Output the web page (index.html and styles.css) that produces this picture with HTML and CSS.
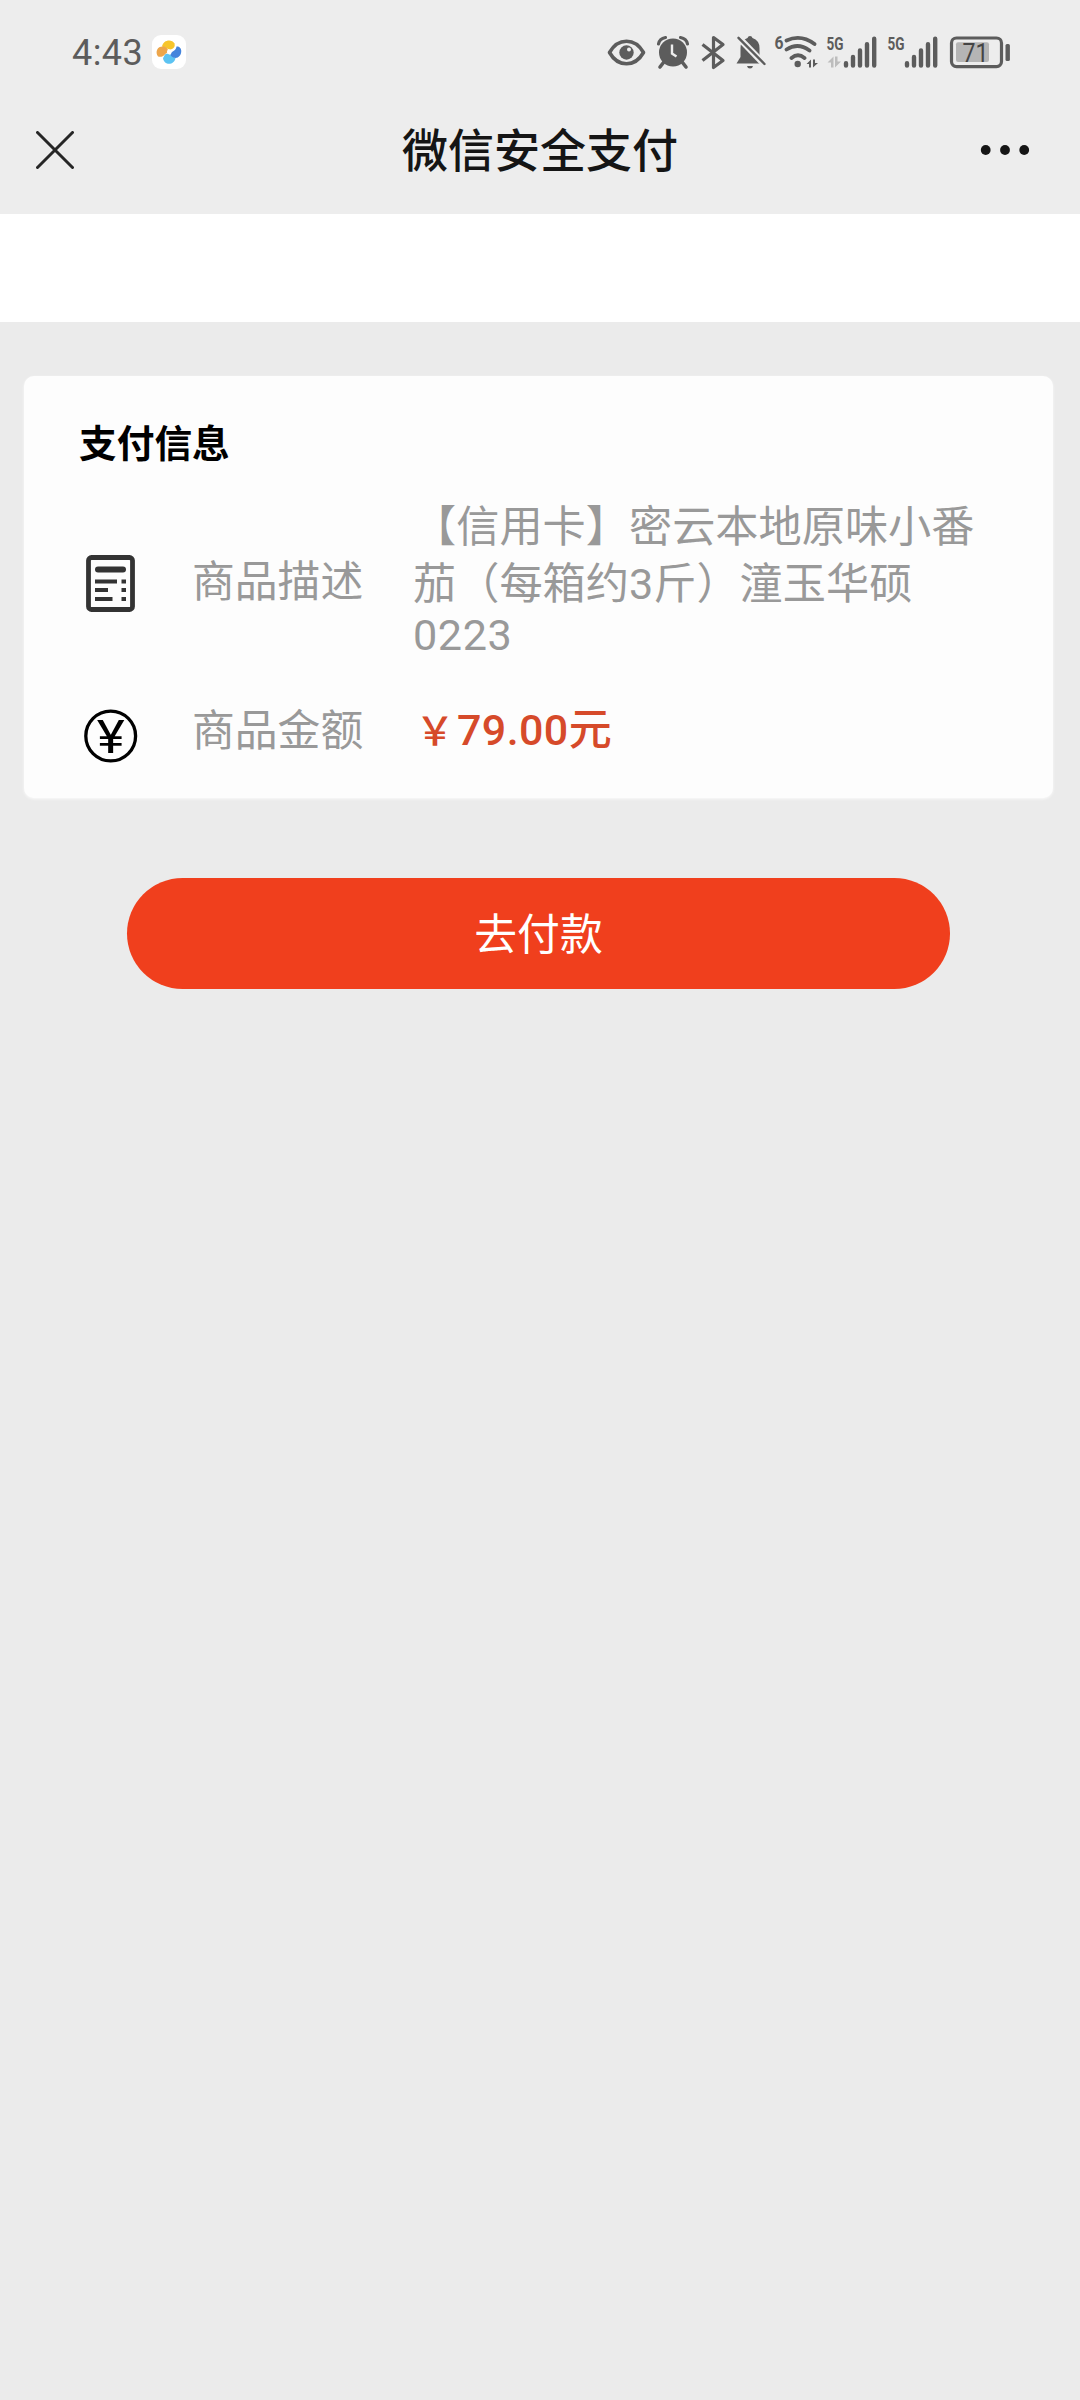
FILE: index.html
```html
<!DOCTYPE html>
<html lang="zh-CN">
<head>
  <meta charset="UTF-8" />
  <meta name="viewport" content="width=device-width, initial-scale=1.0" />
  <title>微信安全支付</title>
  <link rel="stylesheet" href="styles.css">
</head>
<body>
  <header class="top">
    <div class="status-bar">
      <span class="clock">4:43</span>
      <svg class="app-badge" width="34" height="34" viewBox="0 0 34 34">
        <path d="M10 11.500 C11 4.500 20 3.500 22.500 8.500 C23.500 12 21 14.500 17.500 14.500 Z" fill="#f7c52b"/>
        <path d="M6 21.500 C2.500 16 6 10.500 12 11.500 C16 12.500 17 16 15 18 C12.500 18.500 12 23 6 21.500 Z" fill="#eda64b"/>
        <path d="M11 23 C12.500 21.500 12 18.500 16 18.500 C19 19.500 20 21.500 23.500 23 C22.500 30.500 12 31 11 23 Z" fill="#5cc3f2"/>
        <path d="M18.500 19.500 C18 16 24 17 24.500 11.500 C31.500 11 30.500 22.500 23.500 23 C20.500 22.500 18.800 21.500 18.500 19.500 Z" fill="#4484dc"/>
        <circle cx="17.300" cy="17" r="2.400" fill="#fff"/>
      </svg>

      <div class="status-icons">
        <!-- eye comfort -->
        <svg width="46" height="40" viewBox="0 0 46 40">
          <path d="M5.500 20.500 C14 5.500 31 5.500 39.500 20.500 C31 35.500 14 35.500 5.500 20.500 Z" fill="none" stroke="#5c5c5c" stroke-width="3.600" stroke-linejoin="round"/>
          <circle cx="22.500" cy="20.500" r="7.200" fill="#5c5c5c"/>
          <circle cx="25" cy="17.500" r="2" fill="#ededed"/>
        </svg>
        <!-- alarm -->
        <svg width="45" height="40" viewBox="0 0 45 40">
          <circle cx="23" cy="20.500" r="14" fill="#5c5c5c"/>
          <path d="M8.500 12 Q9.500 6.500 15.500 5.500 M37.500 12 Q36.500 6.500 30.500 5.500" fill="none" stroke="#5c5c5c" stroke-width="3.200" stroke-linecap="round"/>
          <path d="M13.500 30.500 L10 35 M32.500 30.500 L36 35" stroke="#5c5c5c" stroke-width="3.600" stroke-linecap="round"/>
          <path d="M22 12.500 V21.500 L26.500 24.500" fill="none" stroke="#ededed" stroke-width="2.400"/>
        </svg>
        <!-- bluetooth -->
        <svg width="36" height="40" viewBox="0 0 36 40">
          <path d="M7.500 12.500 L28 28.500 L18.500 35.500 V5.500 L28 12.500 L7.500 28.500" fill="none" stroke="#5c5c5c" stroke-width="3.200" stroke-linejoin="round"/>
        </svg>
        <!-- muted bell -->
        <svg width="39" height="40" viewBox="0 0 39 40">
          <path d="M19 4 Q21 4 21.500 6 Q28.500 8.500 28.500 16 V24 L32 31.500 H5.500 L9.500 25 V16 Q9.500 8.500 16.500 6 Q17 4 19 4 Z" fill="#5c5c5c"/>
          <path d="M16 34 H22 Q21.500 36.500 19 36.500 Q16.500 36.500 16 34 Z" fill="#5c5c5c"/>
          <path d="M7.500 5.500 L33 32" stroke="#ededed" stroke-width="6.500"/>
          <path d="M7.500 5.800 L33.500 32" stroke="#5c5c5c" stroke-width="2.400" stroke-linecap="round"/>
        </svg>
        <!-- wifi 6 -->
        <svg width="52" height="40" viewBox="0 0 52 40">
          <text x="4.500" y="17" class="mini" textLength="9" lengthAdjust="spacingAndGlyphs">6</text>
          <path d="M16.500 8.500 Q31 2 44.500 12 M16.500 17.500 Q28 10 39.500 18.500 M21.500 26 Q28 20.500 34.500 26" fill="none" stroke="#5c5c5c" stroke-width="3.800" stroke-linecap="round"/>
          <circle cx="27.700" cy="32" r="3.200" fill="#5c5c5c"/>
          <path d="M41 27.500 V35.500 H39 V32 H36.500 Z M43 35.500 V27.500 H45 V31 H48 Z" fill="#5c5c5c"/>
        </svg>
        <!-- sim 1 -->
        <svg width="60" height="40" viewBox="0 0 60 40">
          <text x="4.500" y="18" class="mini" textLength="17" lengthAdjust="spacingAndGlyphs">5G</text>
          <path d="M11.500 24.500 V35.500 H9 V30.500 H5.500 Z M13 35.500 V24.500 H15.500 V29.500 H19 Z" fill="#bdbdbd"/>
          <path d="M24 31.200 V33.500 M31 25 V33.500 M38 18.500 V33.500 M45 12.200 V33.500 M52.200 6.700 V33.500" stroke="#5c5c5c" stroke-width="4.400" stroke-linecap="round"/>
        </svg>
        <!-- sim 2 -->
        <svg width="60" height="40" viewBox="0 0 60 40">
          <text x="5.500" y="18" class="mini" textLength="17" lengthAdjust="spacingAndGlyphs">5G</text>
          <path d="M25 31.200 V33.500 M32 25 V33.500 M39 18.500 V33.500 M46 12.200 V33.500 M53.200 6.700 V33.500" stroke="#5c5c5c" stroke-width="4.400" stroke-linecap="round"/>
        </svg>
        <!-- battery -->
        <svg width="74" height="40" viewBox="0 0 74 40">
          <rect x="9.500" y="6" width="50" height="28.600" rx="5" fill="none" stroke="#5c5c5c" stroke-width="3.200"/>
          <rect x="14" y="10.300" width="33" height="19.700" rx="2" fill="#b5b5b5"/>
          <rect x="63.500" y="12" width="4.400" height="17" rx="1.500" fill="#5c5c5c"/>
          <text x="20.500" y="29.500" class="percent" textLength="26" lengthAdjust="spacingAndGlyphs">71</text>
        </svg>
      </div>
    </div>

    <nav class="nav-bar">
      <svg class="close" width="38" height="38" viewBox="0 0 38 38">
        <path d="M1.500 1.500 L36.500 36.500 M36.500 1.500 L1.500 36.500" stroke="#262626" stroke-width="3" stroke-linecap="round"/>
      </svg>
      <h1>微信安全支付</h1>
      <svg class="more" width="50" height="12" viewBox="0 0 50 12">
        <circle cx="5.700" cy="6" r="4.900" fill="#151515"/>
        <circle cx="25" cy="6" r="4.900" fill="#151515"/>
        <circle cx="44.200" cy="6" r="4.900" fill="#151515"/>
      </svg>
    </nav>
  </header>

  <div class="blank"></div>

  <main>
    <section class="card">
      <h2>支付信息</h2>
      <div class="row goods">
        <svg class="icon" width="56" height="58" viewBox="0 0 56 58">
          <rect x="4.500" y="2.500" width="44" height="52" rx="3" fill="none" stroke="#333" stroke-width="4.800"/>
          <path d="M14 14.500 H39" stroke="#333" stroke-width="6" stroke-linecap="round"/>
          <path d="M11 26.500 H33 M11 35 H24 M11 44 H28.500 M37.500 26.500 H42 M37.500 35 H42 M37.500 44 H42" stroke="#333" stroke-width="4.200"/>
        </svg>
        <span class="label">商品描述</span>
        <p class="desc">【信用卡】密云本地原味小番茄（每箱约3斤）潼玉华硕<span class="code">0223</span></p>
      </div>
      <div class="row amount">
        <svg class="icon" width="56" height="56" viewBox="0 0 56 56">
          <circle cx="26.700" cy="27" r="24.900" fill="none" stroke="#000" stroke-width="3.300"/>
          <text x="12.700" y="44" class="yen" textLength="28" lengthAdjust="spacingAndGlyphs">¥</text>
        </svg>
        <span class="label">商品金额</span>
        <span class="price"><span class="sign">￥</span><span class="num">79.00</span>元</span>
      </div>
    </section>
    <button class="pay" type="button">去付款</button>
  </main>
</body>
</html>
```

FILE: styles.css
```css
* {
  box-sizing: border-box;
}
body {
  margin: 0;
  min-height: 2400px;
  background: #ebebeb;
  font-family: "Noto Sans CJK SC", sans-serif;
}
h1, h2, p {
  margin: 0;
}
svg {
  display: block;
  flex: none;
}

/* Status bar and title */
.top {
  height: 214px;
  background: #ededed;
}
.status-bar {
  display: flex;
  align-items: center;
  height: 104px;
  padding: 0 64px 0 72px;
}
.clock {
  width: 80px;
  padding-top: 2px;
  font-family: Roboto, sans-serif;
  font-size: 36px;
  line-height: 40px;
  letter-spacing: 0.4px;
  color: #5c5c5c;
}
.app-badge {
  background: #fff;
  border-radius: 9px;
}
.status-icons {
  display: flex;
  margin-left: auto;
}
.mini {
  font: bold 18px Roboto, sans-serif;
  fill: #5c5c5c;
}
.percent {
  font: 26px Roboto, sans-serif;
  fill: #444;
}
.nav-bar {
  display: flex;
  align-items: center;
  justify-content: space-between;
  height: 91px;
  padding: 0 50px 0 36px;
}
.nav-bar h1 {
  margin: 0 0 5px 26px;
  font-size: 46px;
  font-weight: 500;
  line-height: 60px;
  color: #151515;
}

.blank {
  height: 108px;
  background: #fff;
}

/* Payment info */
main {
  padding: 54px 27px 0 24px;
}
.card {
  height: 422px;
  padding: 38px 50px 0 55px;
  background: #fdfdfd;
  border-radius: 10px;
  box-shadow: 0 1px 3px rgba(255, 255, 255, 0.8);
}
.card h2 {
  font-size: 37.7px;
  font-weight: 700;
  line-height: 54px;
  color: #000;
}
.row {
  display: flex;
  align-items: flex-start;
  padding-left: 5px;
}
.goods {
  height: 188px;
  margin-top: 28px;
}
.goods .icon {
  margin-top: 59px;
}
.goods .label {
  margin-top: 53px;
}
.label {
  flex: none;
  width: 273px;
  padding-left: 52px;
  font-size: 42.8px;
  line-height: 58px;
  color: #999;
}
.desc {
  flex: none;
  width: 564px;
  margin-top: 4px;
  font-family: Roboto, "Noto Sans CJK SC", sans-serif;
  font-size: 43.2px;
  line-height: 56.5px;
  color: #999;
}
.code {
  display: block;
  line-height: 46px;
  letter-spacing: 0.6px;
}
.amount .icon {
  margin-top: 25px;
}
.amount .label {
  margin-top: 14px;
}
.yen {
  font: 46px Roboto, sans-serif;
}
.price {
  display: flex;
  align-items: baseline;
  margin-top: 13px;
  font-size: 43px;
  font-weight: 500;
  line-height: 58px;
  color: #d64a2a;
}
.sign {
  width: 44px;
  font-size: 39px;
  text-align: center;
}
.num {
  font-family: Roboto, sans-serif;
  letter-spacing: 0.4px;
}

.pay {
  display: block;
  width: 823px;
  height: 111px;
  margin: 80px 0 0 103px;
  padding: 0 0 5px;
  border: none;
  border-radius: 56px;
  background: #f03f1d;
  color: #fff;
  font-family: inherit;
  font-size: 42.8px;
  line-height: 60px;
}
```
